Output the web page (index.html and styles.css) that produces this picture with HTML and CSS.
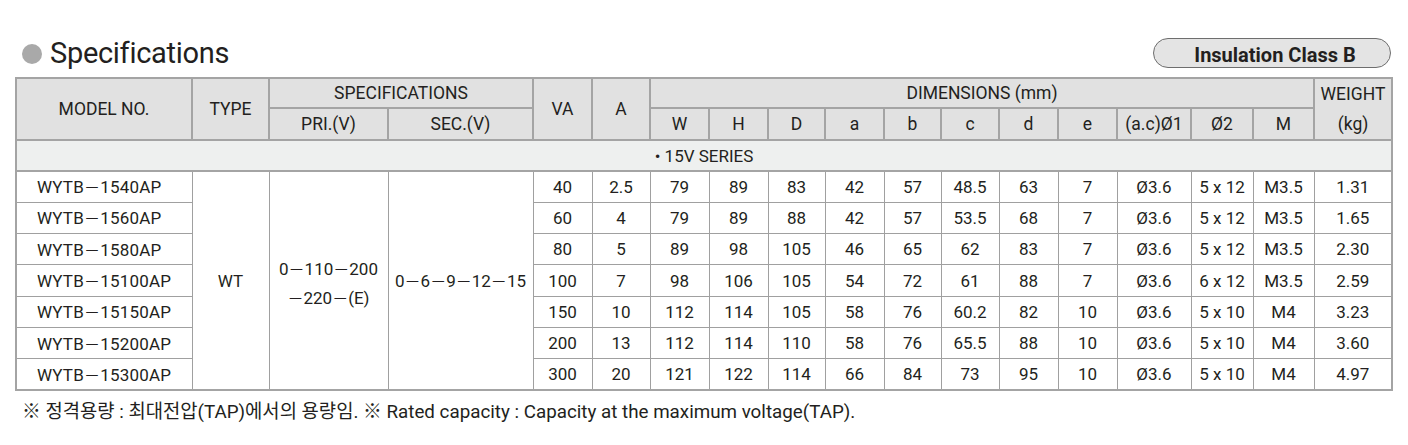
FILE: index.html
```html
<!DOCTYPE html>
<html lang="ko">
<head>
<meta charset="utf-8">
<title>Specifications</title>
<link rel="stylesheet" href="styles.css">
</head>
<body>
<div class="page">
  <div class="titlebar">
    <h1 class="title"><span class="dot"></span>Specifications</h1>
    <div class="badge">Insulation Class B</div>
  </div>
  <table class="spec">
    <colgroup>
      <col class="w-model"><col class="w-type"><col class="w-pri"><col class="w-sec">
      <col class="w-va"><col class="w-a">
      <col class="w-59"><col class="w-59"><col class="w-57"><col class="w-59"><col class="w-57"><col class="w-58"><col class="w-59"><col class="w-59">
      <col class="w-o1"><col class="w-o2"><col class="w-m"><col class="w-kg">
    </colgroup>
    <thead>
      <tr class="h1">
        <th rowspan="2">MODEL NO.</th>
        <th rowspan="2">TYPE</th>
        <th colspan="2">SPECIFICATIONS</th>
        <th rowspan="2">VA</th>
        <th rowspan="2">A</th>
        <th colspan="11">DIMENSIONS (mm)</th>
        <th rowspan="2" class="kg">WEIGHT<br>(kg)</th>
      </tr>
      <tr class="h2">
        <th>PRI.(V)</th><th>SEC.(V)</th>
        <th>W</th><th>H</th><th>D</th><th>a</th><th>b</th><th>c</th><th>d</th><th>e</th><th>(a.c)Ø1</th><th>Ø2</th><th>M</th>
      </tr>
    </thead>
    <tbody>
      <tr class="series"><td colspan="18">• 15V SERIES</td></tr>
      <tr>
        <td class="model">WYTB<span class="dash">－</span>1540AP</td>
        <td rowspan="7">WT</td>
        <td rowspan="7" class="pri">0<span class="dash">－</span>110<span class="dash">－</span>200<br><span class="dash">－</span>220<span class="dash">－</span>(E)</td>
        <td rowspan="7">0<span class="dash">－</span>6<span class="dash">－</span>9<span class="dash">－</span>12<span class="dash">－</span>15</td>
        <td>40</td><td>2.5</td><td>79</td><td>89</td><td>83</td><td>42</td><td>57</td><td>48.5</td><td>63</td><td>7</td><td>Ø3.6</td><td>5 x 12</td><td>M3.5</td><td>1.31</td>
      </tr>
      <tr>
        <td class="model">WYTB<span class="dash">－</span>1560AP</td>
        <td>60</td><td>4</td><td>79</td><td>89</td><td>88</td><td>42</td><td>57</td><td>53.5</td><td>68</td><td>7</td><td>Ø3.6</td><td>5 x 12</td><td>M3.5</td><td>1.65</td>
      </tr>
      <tr>
        <td class="model">WYTB<span class="dash">－</span>1580AP</td>
        <td>80</td><td>5</td><td>89</td><td>98</td><td>105</td><td>46</td><td>65</td><td>62</td><td>83</td><td>7</td><td>Ø3.6</td><td>5 x 12</td><td>M3.5</td><td>2.30</td>
      </tr>
      <tr>
        <td class="model">WYTB<span class="dash">－</span>15100AP</td>
        <td>100</td><td>7</td><td>98</td><td>106</td><td>105</td><td>54</td><td>72</td><td>61</td><td>88</td><td>7</td><td>Ø3.6</td><td>6 x 12</td><td>M3.5</td><td>2.59</td>
      </tr>
      <tr>
        <td class="model">WYTB<span class="dash">－</span>15150AP</td>
        <td>150</td><td>10</td><td>112</td><td>114</td><td>105</td><td>58</td><td>76</td><td>60.2</td><td>82</td><td>10</td><td>Ø3.6</td><td>5 x 10</td><td>M4</td><td>3.23</td>
      </tr>
      <tr>
        <td class="model">WYTB<span class="dash">－</span>15200AP</td>
        <td>200</td><td>13</td><td>112</td><td>114</td><td>110</td><td>58</td><td>76</td><td>65.5</td><td>88</td><td>10</td><td>Ø3.6</td><td>5 x 10</td><td>M4</td><td>3.60</td>
      </tr>
      <tr>
        <td class="model">WYTB<span class="dash">－</span>15300AP</td>
        <td>300</td><td>20</td><td>121</td><td>122</td><td>114</td><td>66</td><td>84</td><td>73</td><td>95</td><td>10</td><td>Ø3.6</td><td>5 x 10</td><td>M4</td><td>4.97</td>
      </tr>
    </tbody>
  </table>
  <p class="note">※ 정격용량 : 최대전압(TAP)에서의 용량임. ※ Rated capacity : Capacity at the maximum voltage(TAP).</p>
</div>
</body>
</html>
```

FILE: styles.css
```css
* { box-sizing: border-box; }
html, body { margin: 0; padding: 0; background: #ffffff; }
body {
  font-family: Roboto, "Noto Sans CJK KR", sans-serif;
  color: #231f20;
}
.page {
  width: 1408px;
  padding: 38px 17px 0 15px;
}
.titlebar {
  display: flex;
  align-items: center;
  justify-content: space-between;
  height: 30px;
  margin-bottom: 9px;
}
.title {
  margin: 0;
  display: flex;
  align-items: center;
  font-size: 29px;
  font-weight: 400;
  letter-spacing: -0.3px;
  line-height: 30px;
  padding-left: 7px;
}
.dot {
  width: 20px;
  height: 20px;
  border-radius: 50%;
  background: #a9a9a9;
  margin-right: 8px;
  margin-top: 2px;
}
.badge {
  width: 238px;
  height: 30px;
  border: 1px solid #6e6e6e;
  border-radius: 15px;
  background: #e4e4e4;
  font-size: 20px;
  font-weight: 700;
  line-height: 28px;
  padding-top: 2px;
  text-align: center;
  padding-left: 6px;
  letter-spacing: 0;
}
.spec {
  width: 1376px;
  table-layout: fixed;
  border-collapse: collapse;
  font-size: 17px;
  border: 2px solid #a4a4a4;
}
.w-model { width: 176px; }
.w-type { width: 77px; }
.w-pri { width: 119px; }
.w-sec { width: 145px; }
.w-va { width: 59px; }
.w-a { width: 58px; }
.w-59 { width: 59px; }
.w-57 { width: 57px; }
.w-58 { width: 58px; }
.w-o1 { width: 74px; }
.w-o2 { width: 62px; }
.w-m { width: 61px; }
.w-kg { width: 78px; }
.spec th {
  background: #e1e1e1;
  font-weight: 400;
  font-size: 17.5px;
  border: 2px solid #a4a4a4;
  padding: 0;
  text-align: center;
  line-height: 22px;
}
.spec .h1 { height: 30px; }
.spec .h2 { height: 31px; }
.spec .kg { line-height: 30px; }
.spec td {
  border: 1px solid #a0a0a0;
  padding: 0;
  text-align: center;
  height: 31.3px;
  line-height: 22px;
  white-space: nowrap;
}
.spec .series td {
  background: #eef0ef;
  height: 31px;
  border-bottom: 2px solid #a4a4a4;
  border-top: 2px solid #a4a4a4;
}
.spec td.model {
  text-align: left;
  padding-left: 20px;
  letter-spacing: 0.2px;
}
.spec td.pri { line-height: 28px; padding-top: 4px; }
.dash {
  font-family: "Noto Sans CJK KR", sans-serif;
  font-size: 16px;
}
.note {
  margin: 8px 0 0 7px;
  font-size: 18.8px;
  line-height: 26px;
  letter-spacing: 0;
}
```
